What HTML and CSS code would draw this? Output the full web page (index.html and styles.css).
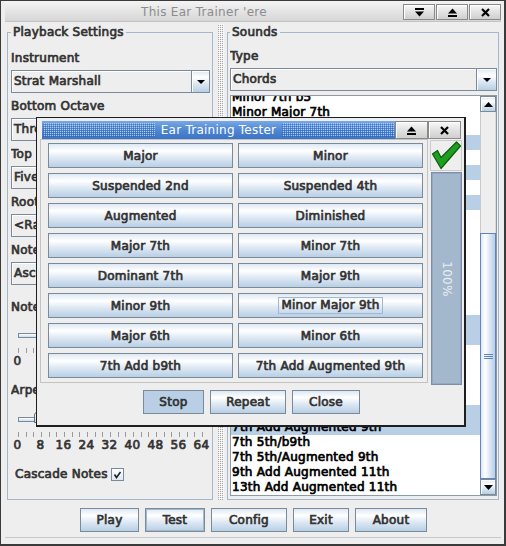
FILE: index.html
```html
<!DOCTYPE html>
<html>
<head>
<meta charset="utf-8">
<title>This Ear Trainer 'ere</title>
<link rel="stylesheet" href="styles.css">
</head>
<body>
<div class="window">
  <div class="titlebar">
    <div class="title">This Ear Trainer 'ere</div>
    <div class="wbtns">
      <span class="tbtn"><svg width="9" height="9" viewBox="0 0 9 9"><rect x="0" y="0" width="9" height="2" fill="#000"/><polygon points="0,3.5 9,3.5 4.5,8.5" fill="#000"/></svg></span>
      <span class="tbtn"><svg width="9" height="9" viewBox="0 0 9 9"><polygon points="0,5.5 9,5.5 4.5,0.5" fill="#000"/><rect x="0" y="7" width="9" height="2" fill="#000"/></svg></span>
      <span class="tbtn"><svg width="9" height="9" viewBox="0 0 9 9"><path d="M1 1 L8 8 M8 1 L1 8" stroke="#000" stroke-width="2.2"/></svg></span>
    </div>
  </div>

  <div class="split">
    <fieldset class="group group-left">
      <legend>Playback Settings</legend>
      <div class="label">Instrument</div>
      <div class="combo"><span class="combo-text">Strat Marshall</span><span class="combo-arrow"><svg width="8" height="4" viewBox="0 0 8 4"><polygon points="0,0 8,0 4,4" fill="#000"/></svg></span></div>
      <div class="label">Bottom Octave</div>
      <div class="combo"><span class="combo-text">Three</span><span class="combo-arrow"><svg width="8" height="4" viewBox="0 0 8 4"><polygon points="0,0 8,0 4,4" fill="#000"/></svg></span></div>
      <div class="label">Top Octave</div>
      <div class="combo"><span class="combo-text">Five</span><span class="combo-arrow"><svg width="8" height="4" viewBox="0 0 8 4"><polygon points="0,0 8,0 4,4" fill="#000"/></svg></span></div>
      <div class="label">Root Note</div>
      <div class="combo"><span class="combo-text">&lt;Random&gt;</span><span class="combo-arrow"><svg width="8" height="4" viewBox="0 0 8 4"><polygon points="0,0 8,0 4,4" fill="#000"/></svg></span></div>
      <div class="label">Note Order</div>
      <div class="combo"><span class="combo-text">Ascending</span><span class="combo-arrow"><svg width="8" height="4" viewBox="0 0 8 4"><polygon points="0,0 8,0 4,4" fill="#000"/></svg></span></div>

      <div class="label label-gap">Note Duration</div>
      <div class="slider slider-1">
        <div class="track"></div>
        <div class="ticks"></div>
        <div class="tick-labels"><span>0</span><span>1</span><span>2</span><span>3</span><span>4</span><span>5</span><span>6</span><span>7</span><span>8</span></div>
      </div>

      <div class="label label-gap2">Arpeggio Delay</div>
      <div class="slider slider-2">
        <div class="track"><span class="thumb"></span></div>
        <div class="ticks"></div>
        <div class="tick-labels"><span>0</span><span>8</span><span>16</span><span>24</span><span>32</span><span>40</span><span>48</span><span>56</span><span>64</span></div>
      </div>

      <div class="cascade">Cascade Notes <span class="checkbox"><svg width="11" height="11" viewBox="0 0 11 11"><path d="M2.5 5.5 L4.5 8.5 L8.5 3" fill="none" stroke="#222" stroke-width="1.6"/></svg></span></div>
    </fieldset>

    <div class="divider"><div class="grip"></div></div>

    <fieldset class="group group-right">
      <legend>Sounds</legend>
      <div class="label">Type</div>
      <div class="combo combo-type"><span class="combo-text">Chords</span><span class="combo-arrow"><svg width="8" height="4" viewBox="0 0 8 4"><polygon points="0,0 8,0 4,4" fill="#000"/></svg></span></div>
      <div class="list">
        <div class="items">
          <div class="items-inner">
            <div class="row">Minor 7th b5</div>
            <div class="row">Minor Major 7th</div>
            <div class="row">Diminished 7th</div>
            <div class="row sel">Major 9th</div>
            <div class="row">Dominant 9th</div>
            <div class="row sel">Minor 9th</div>
            <div class="row">Dominant 7th Sus4</div>
            <div class="row sel">Minor Major 9th</div>
            <div class="row">Major 11th</div>
            <div class="row">Minor 11th</div>
            <div class="row">Dominant 11th</div>
            <div class="row">Major 13th</div>
            <div class="row">Minor 13th</div>
            <div class="row">Dominant 13th</div>
            <div class="row">6th Add 9th</div>
            <div class="row sel">Major 6th</div>
            <div class="row sel">Minor 6th</div>
            <div class="row">Minor 6th Add 9th</div>
            <div class="row">7th Flat 5th</div>
            <div class="row">7th Augmented 5th</div>
            <div class="row">7th Add 11th</div>
            <div class="row sel">7th Add b9th</div>
            <div class="row sel">7th Add Augmented 9th</div>
            <div class="row">7th 5th/b9th</div>
            <div class="row">7th 5th/Augmented 9th</div>
            <div class="row">9th Add Augmented 11th</div>
            <div class="row">13th Add Augmented 11th</div>
          </div>
        </div>
        <div class="scrollbar">
          <div class="sb-btn"><svg width="9" height="5" viewBox="0 0 9 5"><polygon points="0,5 9,5 4.5,0" fill="#000"/></svg></div>
          <div class="sb-track"><div class="sb-thumb"><span class="grip-lines"></span></div></div>
          <div class="sb-btn"><svg width="9" height="5" viewBox="0 0 9 5"><polygon points="0,0 9,0 4.5,5" fill="#000"/></svg></div>
        </div>
      </div>
    </fieldset>
  </div>

  <div class="buttonbar">
    <span class="btn w-play">Play</span>
    <span class="btn btn-focus w-test">Test</span>
    <span class="btn w-config">Config</span>
    <span class="btn w-exit">Exit</span>
    <span class="btn w-about">About</span>
  </div>

  <div class="dialog">
    <div class="dtitle">
      <div class="dbar"><span class="bumps"></span><span class="dtext">Ear Training Tester</span><span class="bumps"></span></div>
      <span class="dtbtn"><svg width="9" height="9" viewBox="0 0 9 9"><polygon points="0,5.5 9,5.5 4.5,0.5" fill="#000"/><rect x="0" y="7" width="9" height="2" fill="#000"/></svg></span>
      <span class="dtbtn"><svg width="9" height="9" viewBox="0 0 9 9"><path d="M1 1 L8 8 M8 1 L1 8" stroke="#000" stroke-width="2.2"/></svg></span>
    </div>
    <div class="dbody">
      <div class="dtop">
        <div class="grid">
          <span class="btn gbtn">Major</span>
          <span class="btn gbtn">Minor</span>
          <span class="btn gbtn">Suspended 2nd</span>
          <span class="btn gbtn">Suspended 4th</span>
          <span class="btn gbtn">Augmented</span>
          <span class="btn gbtn">Diminished</span>
          <span class="btn gbtn">Major 7th</span>
          <span class="btn gbtn">Minor 7th</span>
          <span class="btn gbtn">Dominant 7th</span>
          <span class="btn gbtn">Major 9th</span>
          <span class="btn gbtn">Minor 9th</span>
          <span class="btn gbtn"><span class="focus">Minor Major 9th</span></span>
          <span class="btn gbtn">Major 6th</span>
          <span class="btn gbtn">Minor 6th</span>
          <span class="btn gbtn">7th Add b9th</span>
          <span class="btn gbtn">7th Add Augmented 9th</span>
        </div>
        <div class="side">
          <div class="check"><svg width="30" height="29" viewBox="0 0 30 29"><polygon points="1.5,13 6.5,9.5 10,16.5 25.5,1 29.5,5 10,27.5" fill="#1f9e1f" stroke="#0c5c0c" stroke-width="1.2" stroke-linejoin="round"/></svg></div>
          <div class="progress"><span>100%</span></div>
        </div>
      </div>
      <div class="dbtns">
        <span class="btn btn-pressed w-stop">Stop</span>
        <span class="btn w-repeat">Repeat</span>
        <span class="btn w-close">Close</span>
      </div>
    </div>
  </div>
</div>
</body>
</html>
```

FILE: styles.css
```css
* { box-sizing: border-box; }
html, body { margin: 0; padding: 0; }
body {
  width: 506px;
  height: 546px;
  overflow: hidden;
  background: #eeeeee;
  font-family: "DejaVu Sans", "Liberation Sans", sans-serif;
  font-size: 12px;
  letter-spacing: 0.25px;
  color: #333333;
}

/* Java-style synthetic bold: regular face, thickened strokes */
.group legend, .label, .combo-text, .row, .btn, .tick-labels, .cascade {
  font-weight: normal;
  -webkit-text-stroke: 0.7px currentColor;
}

.window {
  position: relative;
  width: 506px;
  height: 546px;
  display: flex;
  flex-direction: column;
  background: #eeeeee;
  border-style: solid;
  border-color: #3a3a3a;
  border-width: 1px 2px 2px 1px;
  padding: 0 3px 6px 4px;
}

/* main title bar */
.titlebar {
  height: 21px;
  flex: none;
  display: flex;
  align-items: flex-start;
  border-bottom: 1px solid #c4c4c4;
  background: linear-gradient(#f4f4f4, #e6e6e6 45%, #d6d6d6);
}
.title {
  flex: 1;
  text-align: center;
  line-height: 22px;
  color: #8c8c8c;
  letter-spacing: 0.3px;
}
.wbtns { display: flex; gap: 1px; padding-top: 3px; }
.tbtn, .dtbtn {
  width: 32px;
  height: 16px;
  display: flex;
  align-items: center;
  justify-content: center;
  border: 1px solid #8a8a8a;
  background: linear-gradient(#f8f8f8, #e2e2e2 50%, #cfcfcf);
  box-shadow: inset 1px 1px 0 #ffffff;
}

/* split pane */
.split {
  height: 480px;
  flex: none;
  display: flex;
  padding: 2px;
}
.group {
  margin: 0;
  min-width: 0;
  border: 1px solid #a3b8cc;
  display: flex;
  flex-direction: column;
}
.group legend {
  padding: 0 2px;
  line-height: 16px;
  color: #333333;
}
.group-left { width: 206px; flex: none; padding: 10px 2px 0 3px; }
.group-right { flex: 1; padding: 8px 1px 3px 2px; }

.divider { width: 14px; flex: none; display: flex; justify-content: center; padding-left: 1px; }
.grip {
  width: 6px;
  height: 100%;
  background: conic-gradient(#ffffff 0 25%, transparent 0 50%, #a9a9a9 0 75%, transparent 0) 0 0 / 2px 2px;
}

.label {
  height: 16px;
  line-height: 16px;
  color: #333333;
  white-space: nowrap;
  overflow: hidden;
}
.label-gap { margin-top: 9px; }
.label-gap2 { margin-top: 13px; }

.combo {
  height: 23px;
  flex: none;
  margin: 4px 0 5px;
  display: flex;
  border: 1px solid #7a8a99;
  background: #eeeeee;
  box-shadow: inset 1px 1px 0 #ffffff;
}
.combo-text {
  flex: 1;
  padding-left: 2px;
  line-height: 21px;
  color: #333333;
  white-space: nowrap;
  overflow: hidden;
}
.combo-arrow {
  width: 18px;
  flex: none;
  display: flex;
  align-items: center;
  justify-content: center;
  border-left: 1px solid #7a8a99;
  background: linear-gradient(#dde8f3 0%, #ffffff 30%, #dde8f3 60%, #b8cfe5 100%);
  box-shadow: inset 1px 1px 0 #ffffff;
}
.combo-type .combo-arrow { width: 20px; }
.combo-type { margin-bottom: 4px; }

/* sliders */
.slider { flex: none; padding-left: 7px; }
.slider-1 { padding-top: 18px; }
.slider-2 { padding-top: 19px; }
.track {
  position: relative;
  width: 185px;
  height: 5px;
  border: 1px solid #7a8a99;
  background: linear-gradient(#ffffff, #c8ddf2);
}
.thumb {
  position: absolute;
  left: 15px;
  top: -6px;
  width: 15px;
  height: 11px;
  border: 1px solid #5a6a7a;
  border-radius: 3px 3px 0 0;
  background: linear-gradient(#ffffff, #c8ddf2);
}
.ticks {
  margin-top: 10px;
  width: 186px;
  height: 5px;
  background: repeating-linear-gradient(to right, #9a9a9a 0 1px, transparent 1px 7.667px);
}
.tick-labels {
  display: grid;
  grid-template-columns: repeat(9, 23px);
  margin-left: -12px;
  height: 16px;
  line-height: 16px;
  color: #333333;
}
.tick-labels span { text-align: center; }

.cascade {
  margin-top: 13px;
  padding-left: 4px;
  height: 16px;
  line-height: 16px;
  color: #333333;
  display: flex;
  align-items: center;
  gap: 3px;
  white-space: nowrap;
}
.checkbox {
  width: 13px;
  height: 13px;
  border: 1px solid #7a8a99;
  background: linear-gradient(#ffffff, #dde8f3);
  display: flex;
  align-items: center;
  justify-content: center;
  -webkit-text-stroke: 0;
}

/* list */
.list {
  height: 401px;
  flex: none;
  display: flex;
  border: 1px solid #8e9aa6;
  background: #ffffff;
}
.items { flex: 1; overflow: hidden; }
.items-inner { margin-top: -6px; }
.row {
  height: 15px;
  line-height: 15px;
  padding-left: 1px;
  color: #000000;
  white-space: nowrap;
}
.row.sel { background: #b8cfe5; }
.scrollbar {
  width: 16px;
  flex: none;
  display: flex;
  flex-direction: column;
  background: #eeeeee;
}
.sb-btn {
  height: 16px;
  flex: none;
  display: flex;
  align-items: center;
  justify-content: center;
  border: 1px solid #7a8a99;
  background: linear-gradient(#dde8f3 0%, #ffffff 30%, #dde8f3 60%, #b8cfe5 100%);
  box-shadow: inset 1px 1px 0 #ffffff;
}
.sb-track {
  flex: 1;
  display: flex;
  flex-direction: column;
  padding-top: 121px;
  border-left: 1px solid #c9c9c9;
  border-right: 1px solid #dadada;
}
.sb-thumb {
  flex: 1;
  margin-left: -1px;
  margin-right: -1px;
  display: flex;
  align-items: center;
  justify-content: center;
  border: 1px solid #6382bf;
  background: linear-gradient(to right, #dde8f3 0%, #ffffff 30%, #dde8f3 60%, #b8cfe5 100%);
}
.grip-lines {
  width: 9px;
  height: 5px;
  background: repeating-linear-gradient(#6382bf 0 1px, transparent 1px 2px);
}

/* buttons */
.buttonbar {
  flex: 1;
  display: flex;
  justify-content: center;
  gap: 6px;
  padding-top: 6px;
  padding-left: 1px;
  border-bottom: 1px solid #c8c8c8;
}
.btn {
  height: 24px;
  padding: 0;
  display: inline-flex;
  align-items: center;
  justify-content: center;
  border: 1px solid #7a8a99;
  background: linear-gradient(#dde8f3 0%, #ffffff 30%, #dde8f3 60%, #b8cfe5 100%);
  color: #333333;
  white-space: nowrap;
}
.w-play { width: 59px; }
.w-test { width: 60px; }
.w-config { width: 76px; }
.w-exit { width: 56px; }
.w-about { width: 72px; }
.w-stop { width: 61px; }
.w-repeat { width: 76px; }
.w-close { width: 68px; }
.btn-focus { box-shadow: inset 0 0 0 1px #a3b8cc; }
.btn-pressed { background: #b8cfe5; }

/* dialog */
.dialog {
  position: absolute;
  left: 35px;
  top: 116px;
  width: 430px;
  height: 310px;
  display: flex;
  flex-direction: column;
  background: #eeeeee;
  border-style: solid;
  border-color: #1e1e1e;
  border-width: 1px 2px 2px 1px;
  padding: 3px 1px 4px 3px;
}
.dtitle { height: 18px; flex: none; display: flex; }
.dbar {
  flex: 1;
  margin-left: 2px;
  display: flex;
  align-items: center;
  padding: 2px 1px;
  background: linear-gradient(#78a8e6, #4f87d2 50%, #3c74c6);
}
.bumps {
  flex: 1;
  height: 100%;
  background: conic-gradient(rgba(190, 215, 250, 0.85) 0 25%, transparent 0 50%, rgba(30, 80, 160, 0.45) 0 75%, transparent 0) 0 0 / 2px 2px;
}
.dtext {
  padding: 0 6px;
  color: #ffffff;
  line-height: 14px;
  white-space: nowrap;
}
.dtitle .dtbtn { width: 33px; height: 18px; }
.dtitle .dtbtn:last-child { margin-right: 2px; }

.dbody { flex: 1; display: flex; flex-direction: column; }
.dtop { height: 246px; flex: none; display: flex; }
.grid {
  width: 388px;
  height: 244px;
  flex: none;
  border: 1px solid #c2c2c2;
  padding: 3px 4px 4px 7px;
  display: grid;
  grid-template-columns: 185px 185px;
  grid-auto-rows: 25px;
  gap: 5px;
}
.gbtn { height: 25px; }
.focus { border: 1px solid #a3b8cc; padding: 0 2px; line-height: 15px; }

.side { flex: 1; display: flex; flex-direction: column; padding-top: 1px; }
.check {
  width: 32px;
  height: 31px;
  margin-left: 2px;
  border: 1px solid #cccccc;
  display: flex;
  align-items: center;
  justify-content: center;
}
.progress {
  flex: 1;
  width: 31px;
  margin: 1px 0 0 3px;
  border: 1px solid #7d8ea9;
  box-shadow: inset 0 0 0 1px #94a8c2;
  background: #a3b8cc;
  display: flex;
  align-items: center;
  justify-content: center;
}
.progress span {
  transform: rotate(90deg);
  color: #e9edf2;
  white-space: nowrap;
}

.dbtns {
  flex: 1;
  display: flex;
  justify-content: center;
  gap: 6px;
  padding-top: 5px;
}
```
